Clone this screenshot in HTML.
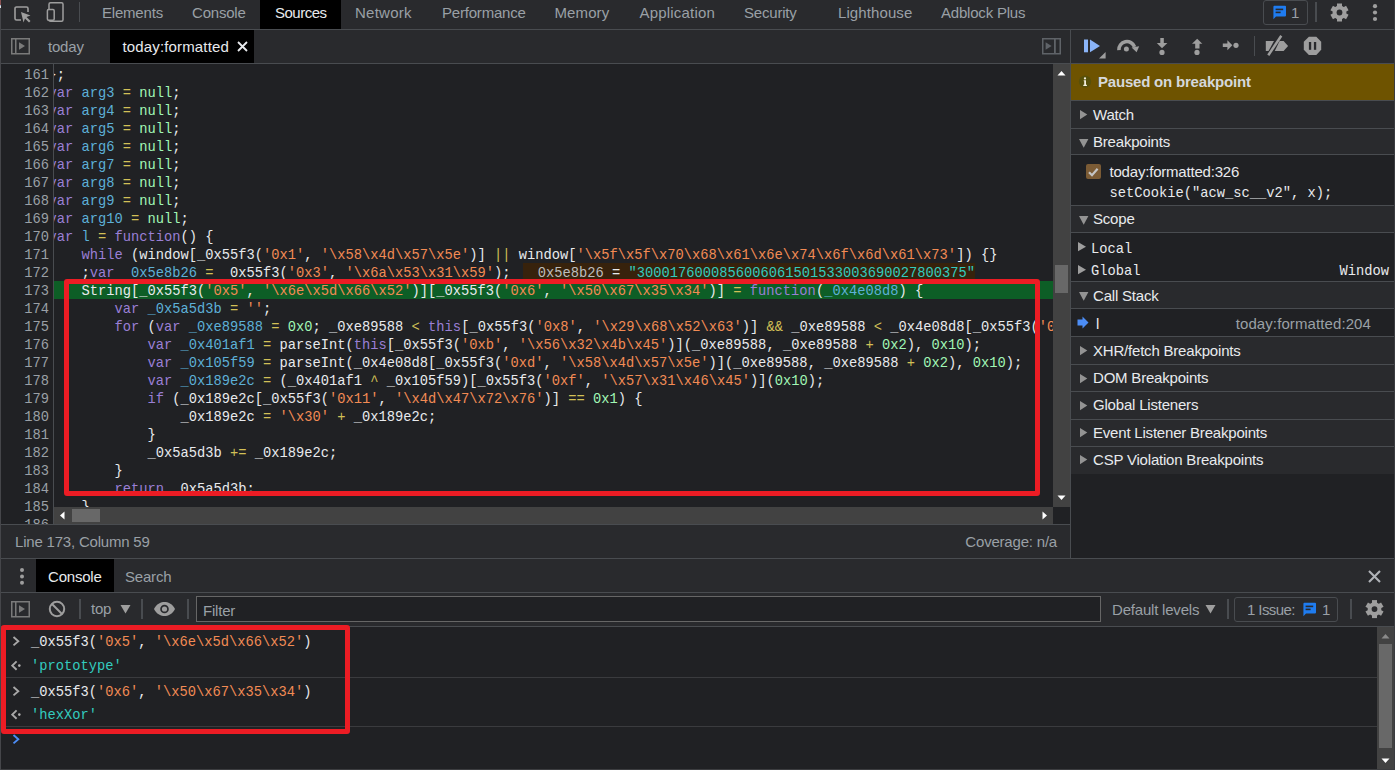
<!DOCTYPE html>
<html><head><meta charset="utf-8"><style>
html,body{margin:0;padding:0;}
body{width:1395px;height:770px;overflow:hidden;position:relative;background:#202124;font-family:'Liberation Sans',sans-serif;}
body div{position:absolute;}
svg{display:block}
</style></head><body>
<div style="left:0px;top:0px;width:1395px;height:29px;background:#292a2d"></div><div style="left:0px;top:29px;width:1395px;height:1px;background:#494c50"></div><div style="left:0px;top:30px;width:1070px;height:33px;background:#292a2d"></div><div style="left:0px;top:63px;width:1070px;height:1px;background:#494c50"></div><div style="left:1071px;top:30px;width:324px;height:33px;background:#292a2d"></div><div style="left:1071px;top:63px;width:324px;height:1px;background:#494c50"></div><div style="left:1070px;top:30px;width:1px;height:529px;background:#494c50"></div><div style="left:260px;top:0px;width:81px;height:29px;background:#000"></div><div style="left:110px;top:30px;width:144px;height:33px;background:#000"></div><div style="left:0px;top:64px;width:1070px;height:461px;background:#202124"></div><div style="left:53px;top:64px;width:1px;height:461px;background:#494c50"></div><div style="left:102px;top:2.80px;line-height:20px;font-size:15px;font-family:'Liberation Sans',sans-serif;font-weight:400;color:#9aa0a6;letter-spacing:-0.2px;white-space:pre;">Elements</div><div style="left:192px;top:2.80px;line-height:20px;font-size:15px;font-family:'Liberation Sans',sans-serif;font-weight:400;color:#9aa0a6;letter-spacing:-0.2px;white-space:pre;">Console</div><div style="left:275px;top:2.80px;line-height:20px;font-size:15px;font-family:'Liberation Sans',sans-serif;font-weight:400;color:#e8eaed;letter-spacing:-0.5px;white-space:pre;">Sources</div><div style="left:355px;top:2.80px;line-height:20px;font-size:15px;font-family:'Liberation Sans',sans-serif;font-weight:400;color:#9aa0a6;letter-spacing:0.25px;white-space:pre;">Network</div><div style="left:442px;top:2.80px;line-height:20px;font-size:15px;font-family:'Liberation Sans',sans-serif;font-weight:400;color:#9aa0a6;letter-spacing:-0.2px;white-space:pre;">Performance</div><div style="left:554.5px;top:2.80px;line-height:20px;font-size:15px;font-family:'Liberation Sans',sans-serif;font-weight:400;color:#9aa0a6;letter-spacing:0.1px;white-space:pre;">Memory</div><div style="left:639.5px;top:2.80px;line-height:20px;font-size:15px;font-family:'Liberation Sans',sans-serif;font-weight:400;color:#9aa0a6;letter-spacing:0.2px;white-space:pre;">Application</div><div style="left:744px;top:2.80px;line-height:20px;font-size:15px;font-family:'Liberation Sans',sans-serif;font-weight:400;color:#9aa0a6;letter-spacing:-0.2px;white-space:pre;">Security</div><div style="left:838px;top:2.80px;line-height:20px;font-size:15px;font-family:'Liberation Sans',sans-serif;font-weight:400;color:#9aa0a6;letter-spacing:0.1px;white-space:pre;">Lighthouse</div><div style="left:941px;top:2.80px;line-height:20px;font-size:15px;font-family:'Liberation Sans',sans-serif;font-weight:400;color:#9aa0a6;letter-spacing:-0.2px;white-space:pre;">Adblock Plus</div><svg style="position:absolute;left:12px;top:3px" width="22" height="22" viewBox="0 0 22 22"><path d="M9 17H4.5a1.5 1.5 0 0 1-1.5-1.5v-10A1.5 1.5 0 0 1 4.5 4h10A1.5 1.5 0 0 1 16 5.5V9" fill="none" stroke="#9e9e9e" stroke-width="1.6"/><path d="M9 9l9.5 3.5-4 1.5 4 4-1.5 1.5-4-4-1.5 4z" fill="#9e9e9e"/></svg><svg style="position:absolute;left:44px;top:0px" width="24" height="24" viewBox="0 0 24 24"><rect x="5" y="2.7" width="14" height="18.6" rx="1.5" fill="none" stroke="#9e9e9e" stroke-width="1.5"/><rect x="3.4" y="9.6" width="6.8" height="10.6" rx="1.2" fill="#292a2d" stroke="#9e9e9e" stroke-width="1.5"/></svg><div style="left:79px;top:2px;width:1px;height:20px;background:#494c50"></div><div style="left:1263px;top:0px;width:45px;height:25px;border:1px solid #494c50;border-radius:3px;box-sizing:border-box"></div><svg style="position:absolute;left:1272px;top:5px" width="15" height="15" viewBox="0 0 15 15"><path d="M1.5 0.8h11.5a1 1 0 0 1 1 1v8.6a1 1 0 0 1-1 1H4l-2.6 2.9V1.8a1 1 0 0 1 1-1z" fill="#1f7cf0"/><rect x="3.6" y="3.6" width="7.6" height="1.6" fill="#292a2d"/><rect x="3.6" y="6.6" width="5" height="1.6" fill="#292a2d"/></svg><div style="left:1291px;top:2.80px;line-height:20px;font-size:15px;font-family:'Liberation Sans',sans-serif;font-weight:400;color:#9aa0a6;letter-spacing:-0.2px;white-space:pre;">1</div><div style="left:1315px;top:2px;width:2px;height:20px;background:#494c50"></div><svg style="position:absolute;left:1328px;top:1px" width="23" height="23" viewBox="0 0 23 23"><circle cx="11.5" cy="11.5" r="6.9" fill="#9e9e9e"/><rect x="9.0" y="2.5" width="5" height="18" fill="#9e9e9e" transform="rotate(0 11.5 11.5)"/><rect x="9.0" y="2.5" width="5" height="18" fill="#9e9e9e" transform="rotate(60 11.5 11.5)"/><rect x="9.0" y="2.5" width="5" height="18" fill="#9e9e9e" transform="rotate(120 11.5 11.5)"/><circle cx="11.5" cy="11.5" r="2.9" fill="#292a2d"/></svg><svg style="position:absolute;left:1369px;top:2px" width="12" height="22" viewBox="0 0 12 22"><circle cx="6" cy="4.2" r="2.1" fill="#9e9e9e"/><circle cx="6" cy="10.5" r="2.1" fill="#9e9e9e"/><circle cx="6" cy="17" r="2.1" fill="#9e9e9e"/></svg><svg style="position:absolute;left:11px;top:38px" width="19" height="17" viewBox="0 0 19 17"><rect x="0.75" y="0.75" width="17.5" height="15" fill="none" stroke="#7a7a7a" stroke-width="1.5"/><rect x="4" y="1" width="1.5" height="14.5" fill="#7a7a7a"/><path d="M8 4.3l6 3.7-6 3.7z" fill="#7a7a7a"/></svg><div style="left:48px;top:36.80px;line-height:20px;font-size:15px;font-family:'Liberation Sans',sans-serif;font-weight:400;color:#9aa0a6;letter-spacing:-0.2px;white-space:pre;">today</div><div style="left:122.5px;top:36.80px;line-height:20px;font-size:15px;font-family:'Liberation Sans',sans-serif;font-weight:400;color:#e8eaed;letter-spacing:0.15px;white-space:pre;">today:formatted</div><svg style="position:absolute;left:236px;top:40px" width="13" height="13" viewBox="0 0 13 13"><path d="M2 2L11 11M11 2L2 11" stroke="#e8eaed" stroke-width="1.8"/></svg><svg style="position:absolute;left:1042px;top:38px" width="19" height="17" viewBox="0 0 19 17"><rect x="0.75" y="0.75" width="17.5" height="15" fill="none" stroke="#5f6368" stroke-width="1.5"/><rect x="12" y="1" width="1.8" height="14.5" fill="#5f6368"/><path d="M3.6 4.3l6 3.7-6 3.7z" fill="#5f6368"/></svg><svg style="position:absolute;left:1078px;top:32px" width="32" height="30" viewBox="0 0 32 30"><rect x="6" y="7.5" width="4" height="12.8" fill="#8ab4f8"/><path d="M12 7.5L22 14 12 20.3z" fill="#8ab4f8"/><path d="M27.6 20v6.6h-6.6z" fill="#9e9e9e"/></svg><svg style="position:absolute;left:1112px;top:32px" width="32" height="26" viewBox="0 0 32 26"><path d="M6.9 18.2A8.1 8.1 0 0 1 22.6 14.9" fill="none" stroke="#9e9e9e" stroke-width="3.6"/><path d="M19.6 15.6L27.2 14.2 24.6 20.2z" fill="#9e9e9e"/><circle cx="14.4" cy="17.1" r="2.5" fill="#9e9e9e"/></svg><svg style="position:absolute;left:1152px;top:32px" width="20" height="26" viewBox="0 0 20 26"><rect x="8.3" y="6" width="3.5" height="6" fill="#9e9e9e"/><path d="M4.8 11.1h10.6L10 16.3z" fill="#9e9e9e"/><circle cx="10" cy="20.4" r="2.6" fill="#9e9e9e"/></svg><svg style="position:absolute;left:1187px;top:32px" width="20" height="26" viewBox="0 0 20 26"><rect x="8.2" y="11" width="4.3" height="5.5" fill="#9e9e9e"/><path d="M5 11.8h10.3L10.2 6.8z" fill="#9e9e9e"/><circle cx="10" cy="20.4" r="2.6" fill="#9e9e9e"/></svg><svg style="position:absolute;left:1219px;top:32px" width="24" height="26" viewBox="0 0 24 26"><rect x="3.8" y="11.5" width="5.5" height="3.5" fill="#9e9e9e"/><path d="M8.4 8.2L13.4 13.3 8.4 18.3z" fill="#9e9e9e"/><circle cx="17" cy="13.3" r="2.6" fill="#9e9e9e"/></svg><div style="left:1254px;top:36px;width:1px;height:20px;background:#494c50"></div><svg style="position:absolute;left:1262px;top:32px" width="30" height="26" viewBox="0 0 30 26"><path d="M3.8 9H12L6.5 19.1H3.8z" fill="#9e9e9e"/><path d="M17.6 9H21.6L26.1 14 21.6 19.1H12.8z" fill="#9e9e9e"/><path d="M19.3 3.8L6.3 23.3" stroke="#9e9e9e" stroke-width="2.5"/></svg><svg style="position:absolute;left:1302px;top:35px" width="22" height="22" viewBox="0 0 22 22"><path d="M6.9 1.8H14.3L19.2 6.7V14.8L14.3 20.1H6.9L1.8 14.8V6.7z" fill="#9e9e9e"/><rect x="6.9" y="7" width="2.3" height="7.8" fill="#292a2d"/><rect x="11.9" y="7" width="2.3" height="7.8" fill="#292a2d"/></svg><div style="left:1071px;top:64px;width:324px;height:706px;background:#202124"></div><div style="left:1071px;top:64px;width:324px;height:36px;background:#6e5300"></div><div style="left:1071px;top:100px;width:324px;height:1px;background:#494c50"></div><svg style="position:absolute;left:1078px;top:75px" width="14" height="14" viewBox="0 0 14 14"><circle cx="7" cy="6.6" r="6.1" fill="#57500a"/><path d="M5.7 5.2h2.3v4.6h0.9v1.1H5.3V9.8h0.9V6.3H5.7z" fill="#f2eedc"/><circle cx="7" cy="3.4" r="1.15" fill="#f2eedc"/></svg><div style="left:1098px;top:71.80px;line-height:20px;font-size:15px;font-family:'Liberation Sans',sans-serif;font-weight:700;color:#d5d8dc;letter-spacing:-0.2px;white-space:pre;">Paused on breakpoint</div><div style="left:1071px;top:101px;width:324px;height:27px;background:#292a2d"></div><div style="left:1071px;top:128px;width:324px;height:1px;background:#494c50"></div><svg style="position:absolute;left:1080px;top:110px" width="9" height="10" viewBox="0 0 9 10"><path d="M0 0L7.3 4.6 0 9.2z" fill="#939393"/></svg><div style="left:1093px;top:104.80px;line-height:20px;font-size:15px;font-family:'Liberation Sans',sans-serif;font-weight:400;color:#e8eaed;letter-spacing:-0.2px;white-space:pre;">Watch</div><div style="left:1071px;top:129px;width:324px;height:25px;background:#292a2d"></div><div style="left:1071px;top:154px;width:324px;height:1px;background:#494c50"></div><svg style="position:absolute;left:1079px;top:138.70000000000002px" width="10" height="10" viewBox="0 0 10 10"><path d="M0 0H9.4L4.7 8.8z" fill="#939393"/></svg><div style="left:1093px;top:132.10px;line-height:20px;font-size:15px;font-family:'Liberation Sans',sans-serif;font-weight:400;color:#e8eaed;letter-spacing:-0.2px;white-space:pre;">Breakpoints</div><div style="left:1071px;top:155px;width:324px;height:50px;background:#202124"></div><div style="left:1071px;top:205px;width:324px;height:1px;background:#494c50"></div><svg style="position:absolute;left:1086px;top:164px" width="15" height="15" viewBox="0 0 15 15"><rect x="0" y="0" width="15" height="15" rx="2" fill="#7b5b35"/><path d="M3 8.2l3 3 5.6-6.4" fill="none" stroke="#c4c4c4" stroke-width="2.2"/></svg><div style="left:1109.5px;top:162.10px;line-height:20px;font-size:15px;font-family:'Liberation Sans',sans-serif;font-weight:400;color:#e8eaed;letter-spacing:-0.2px;white-space:pre;">today:formatted:326</div><div style="left:1109.5px;top:183.84px;line-height:20px;font-size:13.75px;font-family:'Liberation Mono',monospace;font-weight:400;color:#e8eaed;letter-spacing:0px;white-space:pre;">setCookie("acw_sc__v2", x);</div><div style="left:1071px;top:206px;width:324px;height:26px;background:#292a2d"></div><div style="left:1071px;top:232px;width:324px;height:1px;background:#494c50"></div><svg style="position:absolute;left:1079px;top:215.9px" width="10" height="10" viewBox="0 0 10 10"><path d="M0 0H9.4L4.7 8.8z" fill="#939393"/></svg><div style="left:1093px;top:209.30px;line-height:20px;font-size:15px;font-family:'Liberation Sans',sans-serif;font-weight:400;color:#e8eaed;letter-spacing:-0.2px;white-space:pre;">Scope</div><div style="left:1071px;top:233px;width:324px;height:48px;background:#202124"></div><svg style="position:absolute;left:1078px;top:242px" width="9" height="10" viewBox="0 0 9 10"><path d="M0 0L8 4.7 0 9.3z" fill="#9e9e9e"/></svg><div style="left:1091px;top:239.64px;line-height:20px;font-size:13.75px;font-family:'Liberation Mono',monospace;font-weight:400;color:#e8eaed;letter-spacing:0px;white-space:pre;">Local</div><svg style="position:absolute;left:1078px;top:265px" width="9" height="10" viewBox="0 0 9 10"><path d="M0 0L8 4.7 0 9.3z" fill="#9e9e9e"/></svg><div style="left:1091px;top:261.94px;line-height:20px;font-size:13.75px;font-family:'Liberation Mono',monospace;font-weight:400;color:#e8eaed;letter-spacing:0px;white-space:pre;">Global</div><div style="right:6px;top:261.94px;line-height:20px;font-size:13.75px;font-family:'Liberation Mono',monospace;font-weight:400;color:#e8eaed;letter-spacing:0px;white-space:pre">Window</div><div style="left:1071px;top:281px;width:324px;height:1px;background:#494c50"></div><div style="left:1071px;top:282px;width:324px;height:26px;background:#292a2d"></div><div style="left:1071px;top:308px;width:324px;height:1px;background:#494c50"></div><svg style="position:absolute;left:1079px;top:292.4px" width="10" height="10" viewBox="0 0 10 10"><path d="M0 0H9.4L4.7 8.8z" fill="#939393"/></svg><div style="left:1093px;top:285.80px;line-height:20px;font-size:15px;font-family:'Liberation Sans',sans-serif;font-weight:400;color:#e8eaed;letter-spacing:-0.2px;white-space:pre;">Call Stack</div><div style="left:1071px;top:309px;width:324px;height:27px;background:#202124"></div><div style="left:1071px;top:336px;width:324px;height:1px;background:#494c50"></div><svg style="position:absolute;left:1077px;top:316px" width="12" height="13" viewBox="0 0 12 13"><path d="M0.5 3.5H5.5V0.5L11.5 6.5 5.5 12.5V9.5H0.5z" fill="#4c8df6"/></svg><div style="left:1096px;top:313.80px;line-height:20px;font-size:15px;font-family:'Liberation Sans',sans-serif;font-weight:400;color:#e8eaed;letter-spacing:-0.2px;white-space:pre;">l</div><div style="right:24px;top:313.80px;line-height:20px;font-size:15px;font-family:'Liberation Sans',sans-serif;font-weight:400;color:#9aa0a6;letter-spacing:0.1px;white-space:pre">today:formatted:204</div><div style="left:1071px;top:337px;width:324px;height:27px;background:#292a2d"></div><div style="left:1071px;top:364px;width:324px;height:1px;background:#494c50"></div><svg style="position:absolute;left:1080px;top:346.4px" width="9" height="10" viewBox="0 0 9 10"><path d="M0 0L7.3 4.6 0 9.2z" fill="#939393"/></svg><div style="left:1093px;top:340.80px;line-height:20px;font-size:15px;font-family:'Liberation Sans',sans-serif;font-weight:400;color:#e8eaed;letter-spacing:-0.2px;white-space:pre;">XHR/fetch Breakpoints</div><div style="left:1071px;top:365px;width:324px;height:26px;background:#292a2d"></div><div style="left:1071px;top:391px;width:324px;height:1px;background:#494c50"></div><svg style="position:absolute;left:1080px;top:373.59999999999997px" width="9" height="10" viewBox="0 0 9 10"><path d="M0 0L7.3 4.6 0 9.2z" fill="#939393"/></svg><div style="left:1093px;top:368.00px;line-height:20px;font-size:15px;font-family:'Liberation Sans',sans-serif;font-weight:400;color:#e8eaed;letter-spacing:-0.2px;white-space:pre;">DOM Breakpoints</div><div style="left:1071px;top:392px;width:324px;height:27px;background:#292a2d"></div><div style="left:1071px;top:419px;width:324px;height:1px;background:#494c50"></div><svg style="position:absolute;left:1080px;top:401.0px" width="9" height="10" viewBox="0 0 9 10"><path d="M0 0L7.3 4.6 0 9.2z" fill="#939393"/></svg><div style="left:1093px;top:395.40px;line-height:20px;font-size:15px;font-family:'Liberation Sans',sans-serif;font-weight:400;color:#e8eaed;letter-spacing:-0.2px;white-space:pre;">Global Listeners</div><div style="left:1071px;top:420px;width:324px;height:26px;background:#292a2d"></div><div style="left:1071px;top:446px;width:324px;height:1px;background:#494c50"></div><svg style="position:absolute;left:1080px;top:428.2px" width="9" height="10" viewBox="0 0 9 10"><path d="M0 0L7.3 4.6 0 9.2z" fill="#939393"/></svg><div style="left:1093px;top:422.60px;line-height:20px;font-size:15px;font-family:'Liberation Sans',sans-serif;font-weight:400;color:#e8eaed;letter-spacing:-0.2px;white-space:pre;">Event Listener Breakpoints</div><div style="left:1071px;top:447px;width:324px;height:27px;background:#292a2d"></div><svg style="position:absolute;left:1080px;top:455.4px" width="9" height="10" viewBox="0 0 9 10"><path d="M0 0L7.3 4.6 0 9.2z" fill="#939393"/></svg><div style="left:1093px;top:449.80px;line-height:20px;font-size:15px;font-family:'Liberation Sans',sans-serif;font-weight:400;color:#e8eaed;letter-spacing:-0.2px;white-space:pre;">CSP Violation Breakpoints</div><div style="left:0px;top:524px;width:1070px;height:1px;background:#494c50"></div><div style="left:0px;top:525px;width:1070px;height:33px;background:#292a2d"></div><div style="left:15px;top:532.30px;line-height:20px;font-size:15px;font-family:'Liberation Sans',sans-serif;font-weight:400;color:#9aa0a6;letter-spacing:-0.2px;white-space:pre;">Line 173, Column 59</div><div style="right:338px;top:532.30px;line-height:20px;font-size:15px;font-family:'Liberation Sans',sans-serif;font-weight:400;color:#9aa0a6;letter-spacing:-0.2px;white-space:pre">Coverage: n/a</div><div style="left:0px;top:558px;width:1395px;height:1px;background:#494c50"></div><div style="left:0px;top:559px;width:1395px;height:33px;background:#292a2d"></div><div style="left:0px;top:592px;width:1395px;height:1px;background:#494c50"></div><svg style="position:absolute;left:17px;top:566px" width="10" height="22" viewBox="0 0 10 22"><circle cx="5" cy="4" r="2" fill="#9e9e9e"/><circle cx="5" cy="10.4" r="2" fill="#9e9e9e"/><circle cx="5" cy="16.7" r="2" fill="#9e9e9e"/></svg><div style="left:36px;top:559px;width:78px;height:33px;background:#000"></div><div style="left:48px;top:566.80px;line-height:20px;font-size:15px;font-family:'Liberation Sans',sans-serif;font-weight:400;color:#e8eaed;letter-spacing:-0.2px;white-space:pre;">Console</div><div style="left:125px;top:566.80px;line-height:20px;font-size:15px;font-family:'Liberation Sans',sans-serif;font-weight:400;color:#9aa0a6;letter-spacing:-0.2px;white-space:pre;">Search</div><svg style="position:absolute;left:1367px;top:569px" width="15" height="15" viewBox="0 0 15 15"><path d="M2 2L13 13M13 2L2 13" stroke="#b0b3b8" stroke-width="2.1"/></svg><div style="left:0px;top:593px;width:1395px;height:33px;background:#292a2d"></div><div style="left:0px;top:626px;width:1395px;height:1px;background:#494c50"></div><svg style="position:absolute;left:11px;top:601px" width="19" height="17" viewBox="0 0 19 17"><rect x="0.75" y="0.75" width="17.5" height="15" fill="none" stroke="#7a7a7a" stroke-width="1.5"/><rect x="4" y="1" width="1.5" height="14.5" fill="#7a7a7a"/><path d="M8 4.3l6 3.7-6 3.7z" fill="#7a7a7a"/></svg><svg style="position:absolute;left:48px;top:600px" width="18" height="18" viewBox="0 0 18 18"><circle cx="9" cy="9" r="7.2" fill="none" stroke="#9e9e9e" stroke-width="2"/><path d="M4 4L14 14" stroke="#9e9e9e" stroke-width="2"/></svg><div style="left:79px;top:599px;width:2px;height:20px;background:#494c50"></div><div style="left:91px;top:598.80px;line-height:20px;font-size:15px;font-family:'Liberation Sans',sans-serif;font-weight:400;color:#9aa0a6;letter-spacing:-0.2px;white-space:pre;">top</div><svg style="position:absolute;left:120px;top:604px" width="11" height="10" viewBox="0 0 11 10"><path d="M0.5 1H10.5L5.5 9.5z" fill="#9e9e9e"/></svg><div style="left:141px;top:599px;width:2px;height:20px;background:#494c50"></div><svg style="position:absolute;left:153px;top:601px" width="23" height="16" viewBox="0 0 23 16"><path d="M1 8C4 2.5 8 1 11.5 1S19 2.5 22 8C19 13.5 15 15 11.5 15S4 13.5 1 8z" fill="#9e9e9e"/><circle cx="11.5" cy="8" r="4.3" fill="#292a2d"/><circle cx="11.5" cy="8" r="2.6" fill="#9e9e9e"/></svg><div style="left:187px;top:599px;width:2px;height:20px;background:#494c50"></div><div style="left:196px;top:596px;width:905px;height:26px;background:#202124;border:1px solid #666;box-sizing:border-box"></div><div style="left:203px;top:600.80px;line-height:20px;font-size:15px;font-family:'Liberation Sans',sans-serif;font-weight:400;color:#9aa0a6;letter-spacing:-0.2px;white-space:pre;">Filter</div><div style="left:1112px;top:600.30px;line-height:20px;font-size:15px;font-family:'Liberation Sans',sans-serif;font-weight:400;color:#9aa0a6;letter-spacing:-0.2px;white-space:pre;">Default levels</div><svg style="position:absolute;left:1205px;top:604px" width="11" height="10" viewBox="0 0 11 10"><path d="M0.5 1H10.5L5.5 9.5z" fill="#9e9e9e"/></svg><div style="left:1227px;top:599px;width:2px;height:20px;background:#494c50"></div><div style="left:1234px;top:597px;width:104px;height:25px;border:1px solid #494c50;border-radius:3px;box-sizing:border-box"></div><div style="left:1247px;top:600.30px;line-height:20px;font-size:15px;font-family:'Liberation Sans',sans-serif;font-weight:400;color:#9aa0a6;letter-spacing:-0.6px;white-space:pre;">1 Issue:</div><svg style="position:absolute;left:1302px;top:602px" width="15" height="15" viewBox="0 0 15 15"><path d="M1.5 0.8h11.5a1 1 0 0 1 1 1v8.6a1 1 0 0 1-1 1H4l-2.6 2.9V1.8a1 1 0 0 1 1-1z" fill="#1f7cf0"/><rect x="3.6" y="3.6" width="7.6" height="1.6" fill="#292a2d"/><rect x="3.6" y="6.6" width="5" height="1.6" fill="#292a2d"/></svg><div style="left:1322px;top:599.80px;line-height:20px;font-size:15px;font-family:'Liberation Sans',sans-serif;font-weight:400;color:#9aa0a6;letter-spacing:-0.2px;white-space:pre;">1</div><div style="left:1350px;top:599px;width:2px;height:20px;background:#494c50"></div><svg style="position:absolute;left:1363px;top:598px" width="23" height="23" viewBox="0 0 23 23"><circle cx="11.5" cy="11.1" r="6.9" fill="#9e9e9e"/><rect x="9.0" y="2.0999999999999996" width="5" height="18" fill="#9e9e9e" transform="rotate(0 11.5 11.1)"/><rect x="9.0" y="2.0999999999999996" width="5" height="18" fill="#9e9e9e" transform="rotate(60 11.5 11.1)"/><rect x="9.0" y="2.0999999999999996" width="5" height="18" fill="#9e9e9e" transform="rotate(120 11.5 11.1)"/><circle cx="11.5" cy="11.1" r="2.9" fill="#292a2d"/></svg><div style="left:0px;top:627px;width:1395px;height:143px;background:#202124"></div><div style="left:1px;top:677px;width:1376px;height:1px;background:#3a3b3e"></div><div style="left:1px;top:726px;width:1376px;height:1px;background:#3a3b3e"></div><div style="left:1377px;top:627px;width:17px;height:143px;background:#424242"></div><div style="left:1379px;top:644px;width:13px;height:104px;background:#686868"></div><svg style="position:absolute;left:1377px;top:630px" width="17" height="12" viewBox="0 0 17 12"><path d="M4.5 8.5L8.5 4 12.5 8.5z" fill="#8a8a8a"/></svg><svg style="position:absolute;left:1377px;top:755px" width="17" height="12" viewBox="0 0 17 12"><path d="M4.5 3.5L8.5 8 12.5 3.5z" fill="#fff"/></svg><div style="left:1394px;top:0px;width:1px;height:770px;background:#3a3b3f"></div><div style="left:0px;top:769px;width:1395px;height:1px;background:#3c3d40"></div>
<div style="left:0px;top:64px;width:53px;height:460px;overflow:hidden"><div style="left:0;top:-64px;width:1395px;height:600px"><div style="right:1346px;top:67px;line-height:18px;font-size:13.75px;font-family:'Liberation Mono',monospace;color:#9aa0a6;white-space:pre">161</div><div style="right:1346px;top:85px;line-height:18px;font-size:13.75px;font-family:'Liberation Mono',monospace;color:#9aa0a6;white-space:pre">162</div><div style="right:1346px;top:103px;line-height:18px;font-size:13.75px;font-family:'Liberation Mono',monospace;color:#9aa0a6;white-space:pre">163</div><div style="right:1346px;top:121px;line-height:18px;font-size:13.75px;font-family:'Liberation Mono',monospace;color:#9aa0a6;white-space:pre">164</div><div style="right:1346px;top:139px;line-height:18px;font-size:13.75px;font-family:'Liberation Mono',monospace;color:#9aa0a6;white-space:pre">165</div><div style="right:1346px;top:157px;line-height:18px;font-size:13.75px;font-family:'Liberation Mono',monospace;color:#9aa0a6;white-space:pre">166</div><div style="right:1346px;top:175px;line-height:18px;font-size:13.75px;font-family:'Liberation Mono',monospace;color:#9aa0a6;white-space:pre">167</div><div style="right:1346px;top:193px;line-height:18px;font-size:13.75px;font-family:'Liberation Mono',monospace;color:#9aa0a6;white-space:pre">168</div><div style="right:1346px;top:211px;line-height:18px;font-size:13.75px;font-family:'Liberation Mono',monospace;color:#9aa0a6;white-space:pre">169</div><div style="right:1346px;top:229px;line-height:18px;font-size:13.75px;font-family:'Liberation Mono',monospace;color:#9aa0a6;white-space:pre">170</div><div style="right:1346px;top:247px;line-height:18px;font-size:13.75px;font-family:'Liberation Mono',monospace;color:#9aa0a6;white-space:pre">171</div><div style="right:1346px;top:265px;line-height:18px;font-size:13.75px;font-family:'Liberation Mono',monospace;color:#9aa0a6;white-space:pre">172</div><div style="right:1346px;top:283px;line-height:18px;font-size:13.75px;font-family:'Liberation Mono',monospace;color:#9aa0a6;white-space:pre">173</div><div style="right:1346px;top:301px;line-height:18px;font-size:13.75px;font-family:'Liberation Mono',monospace;color:#9aa0a6;white-space:pre">174</div><div style="right:1346px;top:319px;line-height:18px;font-size:13.75px;font-family:'Liberation Mono',monospace;color:#9aa0a6;white-space:pre">175</div><div style="right:1346px;top:337px;line-height:18px;font-size:13.75px;font-family:'Liberation Mono',monospace;color:#9aa0a6;white-space:pre">176</div><div style="right:1346px;top:355px;line-height:18px;font-size:13.75px;font-family:'Liberation Mono',monospace;color:#9aa0a6;white-space:pre">177</div><div style="right:1346px;top:373px;line-height:18px;font-size:13.75px;font-family:'Liberation Mono',monospace;color:#9aa0a6;white-space:pre">178</div><div style="right:1346px;top:391px;line-height:18px;font-size:13.75px;font-family:'Liberation Mono',monospace;color:#9aa0a6;white-space:pre">179</div><div style="right:1346px;top:409px;line-height:18px;font-size:13.75px;font-family:'Liberation Mono',monospace;color:#9aa0a6;white-space:pre">180</div><div style="right:1346px;top:427px;line-height:18px;font-size:13.75px;font-family:'Liberation Mono',monospace;color:#9aa0a6;white-space:pre">181</div><div style="right:1346px;top:445px;line-height:18px;font-size:13.75px;font-family:'Liberation Mono',monospace;color:#9aa0a6;white-space:pre">182</div><div style="right:1346px;top:463px;line-height:18px;font-size:13.75px;font-family:'Liberation Mono',monospace;color:#9aa0a6;white-space:pre">183</div><div style="right:1346px;top:481px;line-height:18px;font-size:13.75px;font-family:'Liberation Mono',monospace;color:#9aa0a6;white-space:pre">184</div><div style="right:1346px;top:499px;line-height:18px;font-size:13.75px;font-family:'Liberation Mono',monospace;color:#9aa0a6;white-space:pre">185</div><div style="right:1346px;top:517px;line-height:18px;font-size:13.75px;font-family:'Liberation Mono',monospace;color:#9aa0a6;white-space:pre">186</div></div></div>
<div style="left:54px;top:64px;width:999px;height:443px;overflow:hidden"><div style="left:-54px;top:-64px;width:1070px;height:600px"><div style="left:48.4px;top:67px;line-height:18px;height:18px;font-size:13.75px;font-family:'Liberation Mono',monospace;color:#e8eaed;white-space:pre">};</div><div style="left:48.4px;top:85px;line-height:18px;height:18px;font-size:13.75px;font-family:'Liberation Mono',monospace;color:#e8eaed;white-space:pre"><span style="color:#9a7fd5">var</span> <span style="color:#5db0d7">arg3</span> <span style="color:#d2c057">=</span> <span style="color:#a1f7b5">null</span>;</div><div style="left:48.4px;top:103px;line-height:18px;height:18px;font-size:13.75px;font-family:'Liberation Mono',monospace;color:#e8eaed;white-space:pre"><span style="color:#9a7fd5">var</span> <span style="color:#5db0d7">arg4</span> <span style="color:#d2c057">=</span> <span style="color:#a1f7b5">null</span>;</div><div style="left:48.4px;top:121px;line-height:18px;height:18px;font-size:13.75px;font-family:'Liberation Mono',monospace;color:#e8eaed;white-space:pre"><span style="color:#9a7fd5">var</span> <span style="color:#5db0d7">arg5</span> <span style="color:#d2c057">=</span> <span style="color:#a1f7b5">null</span>;</div><div style="left:48.4px;top:139px;line-height:18px;height:18px;font-size:13.75px;font-family:'Liberation Mono',monospace;color:#e8eaed;white-space:pre"><span style="color:#9a7fd5">var</span> <span style="color:#5db0d7">arg6</span> <span style="color:#d2c057">=</span> <span style="color:#a1f7b5">null</span>;</div><div style="left:48.4px;top:157px;line-height:18px;height:18px;font-size:13.75px;font-family:'Liberation Mono',monospace;color:#e8eaed;white-space:pre"><span style="color:#9a7fd5">var</span> <span style="color:#5db0d7">arg7</span> <span style="color:#d2c057">=</span> <span style="color:#a1f7b5">null</span>;</div><div style="left:48.4px;top:175px;line-height:18px;height:18px;font-size:13.75px;font-family:'Liberation Mono',monospace;color:#e8eaed;white-space:pre"><span style="color:#9a7fd5">var</span> <span style="color:#5db0d7">arg8</span> <span style="color:#d2c057">=</span> <span style="color:#a1f7b5">null</span>;</div><div style="left:48.4px;top:193px;line-height:18px;height:18px;font-size:13.75px;font-family:'Liberation Mono',monospace;color:#e8eaed;white-space:pre"><span style="color:#9a7fd5">var</span> <span style="color:#5db0d7">arg9</span> <span style="color:#d2c057">=</span> <span style="color:#a1f7b5">null</span>;</div><div style="left:48.4px;top:211px;line-height:18px;height:18px;font-size:13.75px;font-family:'Liberation Mono',monospace;color:#e8eaed;white-space:pre"><span style="color:#9a7fd5">var</span> <span style="color:#5db0d7">arg10</span> <span style="color:#d2c057">=</span> <span style="color:#a1f7b5">null</span>;</div><div style="left:48.4px;top:229px;line-height:18px;height:18px;font-size:13.75px;font-family:'Liberation Mono',monospace;color:#e8eaed;white-space:pre"><span style="color:#9a7fd5">var</span> <span style="color:#5db0d7">l</span> <span style="color:#d2c057">=</span> <span style="color:#9a7fd5">function</span>() {</div><div style="left:48.4px;top:247px;line-height:18px;height:18px;font-size:13.75px;font-family:'Liberation Mono',monospace;color:#e8eaed;white-space:pre">    <span style="color:#9a7fd5">while</span> (window[_0x55f3(<span style="color:#f28b54">&#x27;0x1&#x27;</span>, <span style="color:#f28b54">&#x27;\x58\x4d\x57\x5e&#x27;</span>)] <span style="color:#d2c057">||</span> window[<span style="color:#f28b54">&#x27;\x5f\x5f\x70\x68\x61\x6e\x74\x6f\x6d\x61\x73&#x27;</span>]) {}</div><div style="left:523px;top:263px;width:452px;height:18px;background:#37220c"></div><div style="left:48.4px;top:265px;line-height:18px;height:18px;font-size:13.75px;font-family:'Liberation Mono',monospace;color:#e8eaed;white-space:pre">    ;<span style="color:#9a7fd5">var</span>  <span style="color:#5db0d7">0x5e8b26</span> <span style="color:#d2c057">=</span>  0x55f3(<span style="color:#f28b54">&#x27;0x3&#x27;</span>, <span style="color:#f28b54">&#x27;\x6a\x53\x31\x59&#x27;</span>);</div><div style="left:529.4px;top:265px;line-height:18px;font-size:13.75px;font-family:'Liberation Mono',monospace;color:#bdbdbd;white-space:pre"> 0x5e8b26 <span style="color:#e8eaed">=</span> <span style="color:#33cbbf">"3000176000856006061501533003690027800375"</span></div><div style="left:54px;top:281px;width:999px;height:18px;background:#0d5e26"></div><div style="left:48.4px;top:283px;line-height:18px;height:18px;font-size:13.75px;font-family:'Liberation Mono',monospace;color:#e8eaed;white-space:pre">    String[_0x55f3(<span style="color:#f28b54">&#x27;0x5&#x27;</span>, <span style="color:#f28b54">&#x27;\x6e\x5d\x66\x52&#x27;</span>)][_0x55f3(<span style="color:#f28b54">&#x27;0x6&#x27;</span>, <span style="color:#f28b54">&#x27;\x50\x67\x35\x34&#x27;</span>)] <span style="color:#d2c057">=</span> <span style="color:#9a7fd5">function</span>(<span style="color:#5db0d7">_0x4e08d8</span>) {</div><div style="left:48.4px;top:301px;line-height:18px;height:18px;font-size:13.75px;font-family:'Liberation Mono',monospace;color:#e8eaed;white-space:pre">        <span style="color:#9a7fd5">var</span> <span style="color:#5db0d7">_0x5a5d3b</span> <span style="color:#d2c057">=</span> <span style="color:#f28b54">&#x27;&#x27;</span>;</div><div style="left:48.4px;top:319px;line-height:18px;height:18px;font-size:13.75px;font-family:'Liberation Mono',monospace;color:#e8eaed;white-space:pre">        <span style="color:#9a7fd5">for</span> (<span style="color:#9a7fd5">var</span> <span style="color:#5db0d7">_0xe89588</span> <span style="color:#d2c057">=</span> <span style="color:#a1f7b5">0x0</span>; _0xe89588 <span style="color:#d2c057">&lt;</span> <span style="color:#9a7fd5">this</span>[_0x55f3(<span style="color:#f28b54">&#x27;0x8&#x27;</span>, <span style="color:#f28b54">&#x27;\x29\x68\x52\x63&#x27;</span>)] <span style="color:#d2c057">&amp;&amp;</span> _0xe89588 <span style="color:#d2c057">&lt;</span> _0x4e08d8[_0x55f3(<span style="color:#f28b54">&#x27;0x14&#x27;</span>, <span style="color:#f28b54">&#x27;\x52\x63&#x27;</span>)]; _0xe89588 <span style="color:#d2c057">+=</span> <span style="color:#a1f7b5">0x2</span>) {</div><div style="left:48.4px;top:337px;line-height:18px;height:18px;font-size:13.75px;font-family:'Liberation Mono',monospace;color:#e8eaed;white-space:pre">            <span style="color:#9a7fd5">var</span> <span style="color:#5db0d7">_0x401af1</span> <span style="color:#d2c057">=</span> parseInt(<span style="color:#9a7fd5">this</span>[_0x55f3(<span style="color:#f28b54">&#x27;0xb&#x27;</span>, <span style="color:#f28b54">&#x27;\x56\x32\x4b\x45&#x27;</span>)](_0xe89588, _0xe89588 <span style="color:#d2c057">+</span> <span style="color:#a1f7b5">0x2</span>), <span style="color:#a1f7b5">0x10</span>);</div><div style="left:48.4px;top:355px;line-height:18px;height:18px;font-size:13.75px;font-family:'Liberation Mono',monospace;color:#e8eaed;white-space:pre">            <span style="color:#9a7fd5">var</span> <span style="color:#5db0d7">_0x105f59</span> <span style="color:#d2c057">=</span> parseInt(_0x4e08d8[_0x55f3(<span style="color:#f28b54">&#x27;0xd&#x27;</span>, <span style="color:#f28b54">&#x27;\x58\x4d\x57\x5e&#x27;</span>)](_0xe89588, _0xe89588 <span style="color:#d2c057">+</span> <span style="color:#a1f7b5">0x2</span>), <span style="color:#a1f7b5">0x10</span>);</div><div style="left:48.4px;top:373px;line-height:18px;height:18px;font-size:13.75px;font-family:'Liberation Mono',monospace;color:#e8eaed;white-space:pre">            <span style="color:#9a7fd5">var</span> <span style="color:#5db0d7">_0x189e2c</span> <span style="color:#d2c057">=</span> (_0x401af1 <span style="color:#d2c057">^</span> _0x105f59)[_0x55f3(<span style="color:#f28b54">&#x27;0xf&#x27;</span>, <span style="color:#f28b54">&#x27;\x57\x31\x46\x45&#x27;</span>)](<span style="color:#a1f7b5">0x10</span>);</div><div style="left:48.4px;top:391px;line-height:18px;height:18px;font-size:13.75px;font-family:'Liberation Mono',monospace;color:#e8eaed;white-space:pre">            <span style="color:#9a7fd5">if</span> (_0x189e2c[_0x55f3(<span style="color:#f28b54">&#x27;0x11&#x27;</span>, <span style="color:#f28b54">&#x27;\x4d\x47\x72\x76&#x27;</span>)] <span style="color:#d2c057">==</span> <span style="color:#a1f7b5">0x1</span>) {</div><div style="left:48.4px;top:409px;line-height:18px;height:18px;font-size:13.75px;font-family:'Liberation Mono',monospace;color:#e8eaed;white-space:pre">                _0x189e2c <span style="color:#d2c057">=</span> <span style="color:#f28b54">&#x27;\x30&#x27;</span> <span style="color:#d2c057">+</span> _0x189e2c;</div><div style="left:48.4px;top:427px;line-height:18px;height:18px;font-size:13.75px;font-family:'Liberation Mono',monospace;color:#e8eaed;white-space:pre">            }</div><div style="left:48.4px;top:445px;line-height:18px;height:18px;font-size:13.75px;font-family:'Liberation Mono',monospace;color:#e8eaed;white-space:pre">            _0x5a5d3b <span style="color:#d2c057">+=</span> _0x189e2c;</div><div style="left:48.4px;top:463px;line-height:18px;height:18px;font-size:13.75px;font-family:'Liberation Mono',monospace;color:#e8eaed;white-space:pre">        }</div><div style="left:48.4px;top:481px;line-height:18px;height:18px;font-size:13.75px;font-family:'Liberation Mono',monospace;color:#e8eaed;white-space:pre">        <span style="color:#9a7fd5">return</span> _0x5a5d3b;</div><div style="left:48.4px;top:499px;line-height:18px;height:18px;font-size:13.75px;font-family:'Liberation Mono',monospace;color:#e8eaed;white-space:pre">    }</div><div style="left:48.4px;top:517px;line-height:18px;height:18px;font-size:13.75px;font-family:'Liberation Mono',monospace;color:#e8eaed;white-space:pre"></div></div></div>
<div style="left:1053px;top:64px;width:17px;height:443px;background:#424242"></div><svg style="position:absolute;left:1053px;top:67px" width="17" height="12"><path d="M4.5 8.5L8.5 4 12.5 8.5z" fill="#fff"/></svg><div style="left:1055px;top:265px;width:13px;height:28px;background:#686868"></div><svg style="position:absolute;left:1053px;top:492px" width="17" height="12"><path d="M4.5 3.5L8.5 8 12.5 3.5z" fill="#fff"/></svg><div style="left:54px;top:507px;width:999px;height:17px;background:#424242"></div><svg style="position:absolute;left:56px;top:507px" width="12" height="17"><path d="M8.5 4.5L4 8.5 8.5 12.5z" fill="#fff"/></svg><div style="left:72px;top:509px;width:28px;height:13px;background:#686868"></div><svg style="position:absolute;left:1039px;top:507px" width="12" height="17"><path d="M3.5 4.5L8 8.5 3.5 12.5z" fill="#fff"/></svg><div style="left:1053px;top:507px;width:17px;height:17px;background:#202124"></div>
<div style="left:31px;top:633.94px;line-height:18px;font-size:13.75px;font-family:'Liberation Mono',monospace;color:#e8eaed;white-space:pre">_0x55f3(<span style='color:#f28b54'>'0x5'</span>, <span style='color:#f28b54'>'\x6e\x5d\x66\x52'</span>)</div><div style="left:31px;top:657.64px;line-height:18px;font-size:13.75px;font-family:'Liberation Mono',monospace;color:#33cbbf;white-space:pre">'prototype'</div><div style="left:31px;top:683.94px;line-height:18px;font-size:13.75px;font-family:'Liberation Mono',monospace;color:#e8eaed;white-space:pre">_0x55f3(<span style='color:#f28b54'>'0x6'</span>, <span style='color:#f28b54'>'\x50\x67\x35\x34'</span>)</div><div style="left:31px;top:707.34px;line-height:18px;font-size:13.75px;font-family:'Liberation Mono',monospace;color:#33cbbf;white-space:pre">'hexXor'</div>
<div style="left:0px;top:0px;width:1px;height:770px;background:#45464a"></div><div style="left:0px;top:0px;width:1px;height:5px;background:#8a5050"></div><div style="left:0px;top:5px;width:1px;height:1px;background:#9cb4d0"></div><div style="left:0px;top:6px;width:1px;height:2px;background:#e0e0e0"></div><div style="left:64px;top:279px;width:976px;height:217px;border:5px solid #ec1c24;border-radius:3px;box-sizing:border-box"></div><div style="left:1px;top:625px;width:349px;height:109px;border:5px solid #ec1c24;border-radius:3px;box-sizing:border-box"></div>
<svg style="position:absolute;left:12px;top:636px" width="9" height="12" viewBox="0 0 9 12"><path d="M1.5 1L6.3 5.2 1.5 9.4" fill="none" stroke="#a8a8a8" stroke-width="1.9"/></svg><svg style="position:absolute;left:11px;top:660px" width="11" height="12" viewBox="0 0 11 12"><path d="M5.6 1.4L1.3 5.6 5.6 9.8" fill="none" stroke="#a8a8a8" stroke-width="1.9"/><circle cx="8.3" cy="5.6" r="1.3" fill="#b0b0b0"/></svg><svg style="position:absolute;left:12px;top:686px" width="9" height="12" viewBox="0 0 9 12"><path d="M1.5 1L6.3 5.2 1.5 9.4" fill="none" stroke="#a8a8a8" stroke-width="1.9"/></svg><svg style="position:absolute;left:11px;top:709px" width="11" height="12" viewBox="0 0 11 12"><path d="M5.6 1.4L1.3 5.6 5.6 9.8" fill="none" stroke="#a8a8a8" stroke-width="1.9"/><circle cx="8.3" cy="5.6" r="1.3" fill="#b0b0b0"/></svg><svg style="position:absolute;left:12px;top:734px" width="9" height="12" viewBox="0 0 9 12"><path d="M1.5 1L6.3 5.2 1.5 9.4" fill="none" stroke="#4c8df6" stroke-width="1.9"/></svg></body></html>
